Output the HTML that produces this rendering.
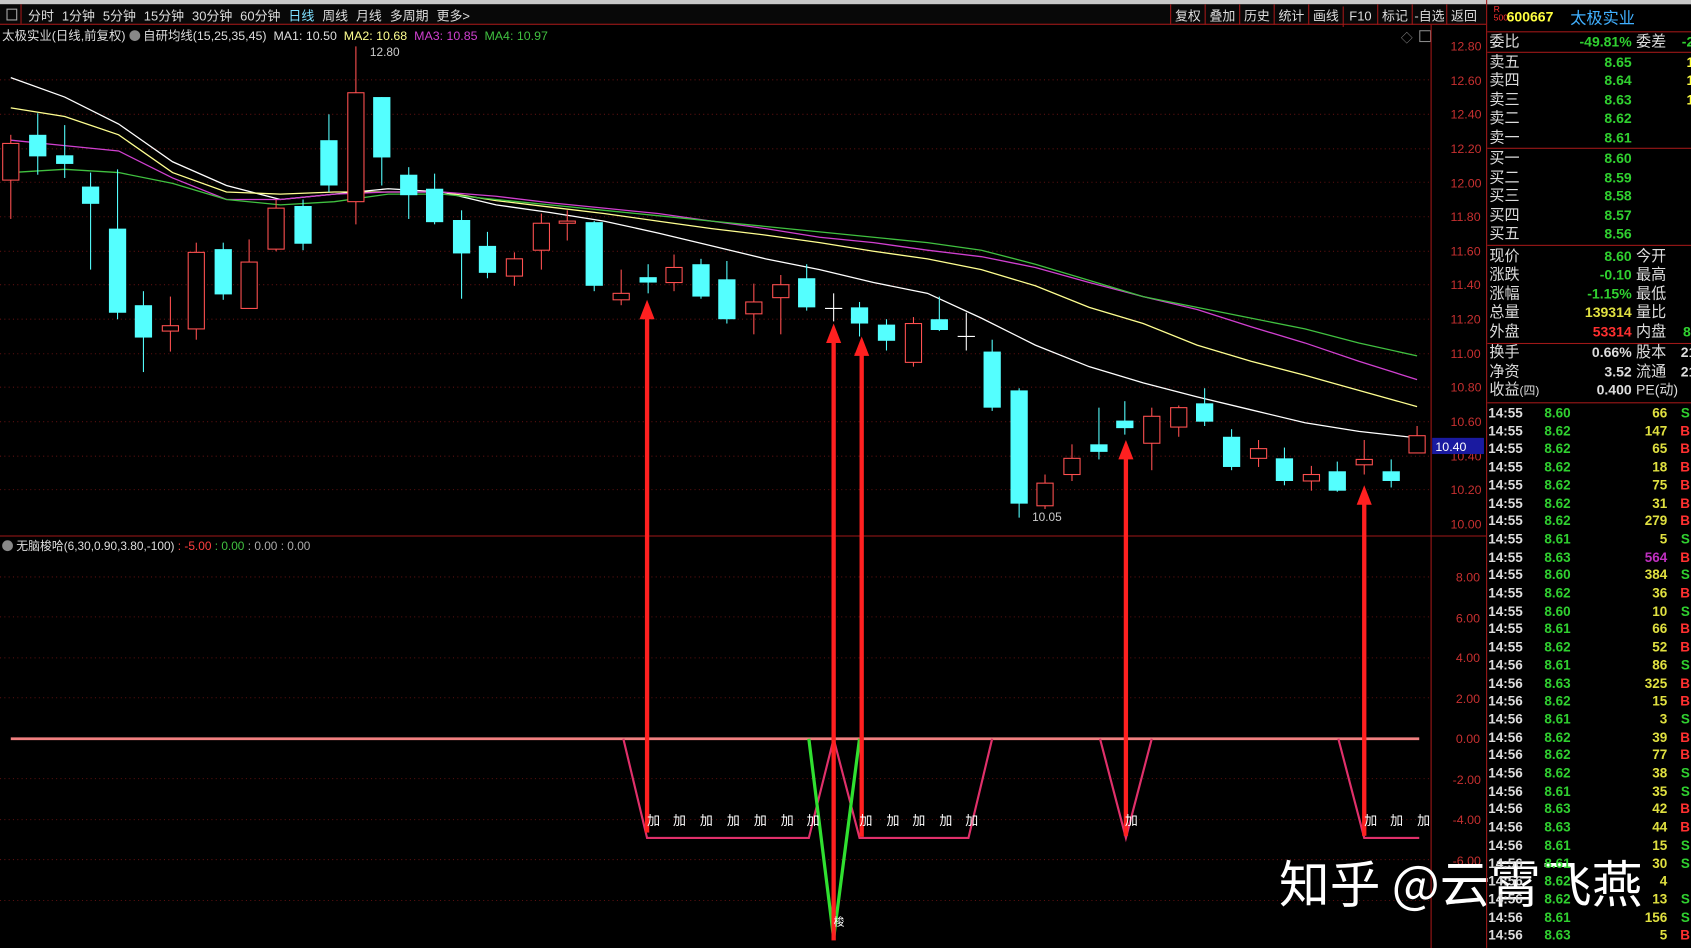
<!DOCTYPE html>
<html><head><meta charset="utf-8"><style>
html,body{margin:0;padding:0;background:#000;overflow:hidden;width:1691px;height:948px}
#w{position:absolute;left:0;top:0;width:1568px;height:879px;transform:scale(1.07845);transform-origin:0 0;background:#000;font-family:"Liberation Sans","Noto Sans CJK SC",sans-serif;color:#ddd}
.t{position:absolute;white-space:nowrap}
#rp div.r{position:absolute;left:0;width:200px;height:17px;font-size:14px;line-height:17px}
.l{position:absolute;left:2px;color:#ddd}
.v{position:absolute;right:66px;font-weight:bold;font-size:13px}
.l2{position:absolute;left:138px;color:#ddd}
.v2{position:absolute;right:-2px;font-weight:bold;font-size:13px}
.tk{position:absolute;left:0;width:190px;height:17px;font-size:12.5px;font-weight:bold;line-height:17px}
.tb{display:inline-block;width:31px;text-align:center;border-left:1px solid #a01818;padding-top:2px;height:17px}
</style></head><body><div id="w">
<div style="position:absolute;left:0;top:0;width:1568px;height:4px;background:#c8c8c8"></div>
<div style="position:absolute;left:0;top:4px;width:1378px;height:18px;border-bottom:1px solid #a01818;background:#080808"></div>
<div style="position:absolute;left:0;top:4px;width:19px;height:18px;border-right:1px solid #a01818"></div>
<div class="t" style="left:6px;top:8px;width:8px;height:9px;border:1px solid #aaa"></div>
<div class="t" style="left:26px;top:6px;font-size:12px;color:#ddd;word-spacing:4px">分时 1分钟 5分钟 15分钟 30分钟 60分钟 <span style="color:#7fe0ff">日线</span> 周线 月线 多周期 更多&gt;</div>
<div class="t" style="left:1085px;top:4px;height:19px;font-size:12px;color:#ddd"><span class="tb">复权</span><span class="tb">叠加</span><span class="tb">历史</span><span class="tb">统计</span><span class="tb">画线</span><span class="tb">F10</span><span class="tb">标记</span><span class="tb">-自选</span><span class="tb">返回</span></div>
<div class="t" style="left:2px;top:25px;font-size:11.5px;color:#ddd">太极实业(日线,前复权) <span style="display:inline-block;width:10px;height:10px;border-radius:50%;background:#888;vertical-align:-1px"></span> 自研均线(15,25,35,45) &nbsp;MA1: 10.50 &nbsp;<span style="color:#ffff90">MA2: 10.68</span> &nbsp;<span style="color:#d040d0">MA3: 10.85</span> &nbsp;<span style="color:#40c040">MA4: 10.97</span></div>
<div class="t" style="left:2px;top:498px;font-size:11px;color:#ddd"><span style="display:inline-block;width:10px;height:10px;border-radius:50%;background:#888;vertical-align:-1px"></span> 无脑梭哈(6,30,0.90,3.80,-100) <span style="color:#ff4040">: -5.00</span> <span style="color:#40c040">: 0.00</span> <span style="color:#aaa">: 0.00</span> <span style="color:#aaa">: 0.00</span></div>
<div class="t" style="left:1299px;top:27px;font-size:11px;color:#888">◇</div>
<div class="t" style="left:1316px;top:28px;width:9px;height:9px;border:1px solid #888"></div>
<svg style="position:absolute;left:0;top:0" width="1378" height="879">
<g stroke="#5a1010" stroke-dasharray="1 3" stroke-width="1">
<line x1="0" y1="74" x2="1327" y2="74"/><line x1="0" y1="106" x2="1327" y2="106"/><line x1="0" y1="138" x2="1327" y2="138"/><line x1="0" y1="169" x2="1327" y2="169"/><line x1="0" y1="201" x2="1327" y2="201"/><line x1="0" y1="233" x2="1327" y2="233"/><line x1="0" y1="264" x2="1327" y2="264"/><line x1="0" y1="296" x2="1327" y2="296"/><line x1="0" y1="328" x2="1327" y2="328"/><line x1="0" y1="359" x2="1327" y2="359"/><line x1="0" y1="391" x2="1327" y2="391"/><line x1="0" y1="423" x2="1327" y2="423"/><line x1="0" y1="454" x2="1327" y2="454"/>
<line x1="0" y1="535" x2="1327" y2="535"/><line x1="0" y1="572" x2="1327" y2="572"/><line x1="0" y1="610" x2="1327" y2="610"/><line x1="0" y1="647" x2="1327" y2="647"/><line x1="0" y1="722" x2="1327" y2="722"/><line x1="0" y1="760" x2="1327" y2="760"/><line x1="0" y1="797" x2="1327" y2="797"/><line x1="0" y1="835" x2="1327" y2="835"/>
</g>
<line x1="1327" y1="23" x2="1327" y2="879" stroke="#a01818"/>
<line x1="0" y1="497" x2="1378" y2="497" stroke="#a01818"/>
<g fill="#c83030" font-size="11.5" font-family="Liberation Sans">
<text x="1345" y="47">12.80</text><text x="1345" y="79">12.60</text><text x="1345" y="110">12.40</text><text x="1345" y="142">12.20</text><text x="1345" y="174">12.00</text><text x="1345" y="205">11.80</text><text x="1345" y="237">11.60</text><text x="1345" y="268">11.40</text><text x="1345" y="300">11.20</text><text x="1345" y="332">11.00</text><text x="1345" y="363">10.80</text><text x="1345" y="395">10.60</text><text x="1345" y="427">10.40</text><text x="1345" y="458">10.20</text><text x="1345" y="490">10.00</text>
<text x="1350" y="539">8.00</text><text x="1350" y="577">6.00</text><text x="1350" y="614">4.00</text><text x="1350" y="652">2.00</text><text x="1350" y="689">0.00</text><text x="1347" y="727">-2.00</text><text x="1347" y="764">-4.00</text><text x="1347" y="802">-6.00</text>
</g>
<rect x="1328" y="406" width="48" height="15" fill="#1a1aa0"/><text x="1331" y="418" fill="#fff" font-size="11.5" font-family="Liberation Sans">10.40</text>
<g fill="none" stroke-width="1.2">
<polyline stroke="#ffffff" points="10,72 60,90 110,115 160,150 210,172 260,185 310,180 360,175 410,178 460,190 510,197 560,205 610,216 660,228 710,240 760,250 810,262 860,272 910,295 960,320 1010,340 1060,355 1110,368 1160,380 1210,392 1260,400 1314,406"/>
<polyline stroke="#ffff90" points="10,100 60,108 110,125 160,160 210,178 260,180 310,178 360,178 410,178 460,186 510,192 560,198 610,205 660,212 710,218 760,225 810,233 860,240 910,250 960,265 1010,285 1060,300 1110,320 1160,335 1210,348 1260,362 1314,377"/>
<polyline stroke="#d040d0" points="10,130 60,135 110,140 160,165 210,185 260,185 310,180 360,178 410,178 460,182 510,188 560,193 610,198 660,205 710,212 760,220 810,225 860,232 910,238 960,248 1010,262 1060,275 1110,287 1160,303 1210,318 1260,335 1314,352"/>
<polyline stroke="#40c040" points="10,160 60,157 110,160 160,170 210,185 260,190 310,187 360,180 410,180 460,185 510,190 560,195 610,200 660,205 710,210 760,215 810,220 860,225 910,232 960,245 1010,260 1060,275 1110,285 1160,295 1210,305 1260,318 1314,330"/>
</g>
<g id="c"></g>
<text x="343" y="52" fill="#ccc" font-size="11" font-family="Liberation Sans">12.80</text>
<text x="957" y="483" fill="#ccc" font-size="11" font-family="Liberation Sans">10.05</text>
<line x1="10" y1="685" x2="1316" y2="685" stroke="#f08080" stroke-width="2.5"/>
<g fill="none" stroke="#e0306a" stroke-width="2">
<polyline points="578,685 600,777 750,777 773,685 797,777 898,777 920,685"/>
<polyline points="1020,685 1044,777 1068,685"/>
<polyline points="1241,685 1265,777 1316,777"/>
</g>
<polyline points="750,685 773,870 797,685" fill="none" stroke="#30e030" stroke-width="3"/>
<g fill="#ff2020" stroke="none">
<rect x="598" y="290" width="4" height="482"/><polygon points="593,296 600,278 607,296"/>
<rect x="771" y="312" width="4" height="560"/><polygon points="766,318 773,300 780,318"/>
<rect x="797" y="324" width="4" height="452"/><polygon points="792,330 799,312 806,330"/>
<rect x="1042" y="420" width="4" height="355"/><polygon points="1037,426 1044,408 1051,426"/>
<rect x="1263" y="462" width="4" height="313"/><polygon points="1258,468 1265,450 1272,468"/>
</g>
<g fill="#fff" font-size="12" font-family="Noto Sans CJK SC">
<text x="600" y="765">加</text><text x="624" y="765">加</text><text x="649" y="765">加</text><text x="674" y="765">加</text><text x="699" y="765">加</text><text x="724" y="765">加</text><text x="748" y="765">加</text>
<text x="797" y="765">加</text><text x="822" y="765">加</text><text x="846" y="765">加</text><text x="871" y="765">加</text><text x="895" y="765">加</text>
<text x="1043" y="765">加</text><text x="1265" y="765">加</text><text x="1289" y="765">加</text><text x="1314" y="765">加</text>
<text x="773" y="858" font-size="10">梭</text>
</g>
</svg>
<div class="t" style="left:1186px;top:782px;font-size:47px;color:#fff;font-family:'Noto Sans CJK SC',sans-serif">知乎 @云霄飞燕</div>
<div id="rp" style="position:absolute;left:1378px;top:0;width:190px;height:879px;border-left:1px solid #a01818;overflow:hidden">
<div class="t" style="left:6px;top:5px;font-size:8px;color:#ff3030;line-height:8px">R<br>500</div>
<div class="t" style="left:18px;top:8px;font-size:13px;font-weight:bold;color:#ffff40">600667</div>
<div class="t" style="left:77px;top:6px;font-size:15px;color:#40b0ff">太极实业</div>
<div style="position:absolute;left:0;top:29px;width:190px;border-top:1px solid #a01818"></div>
<div class="r" style="top:30px"><span class="l">委比</span><span class="v" style="color:#30d030">-49.81%</span><span class="l2">委差</span><span class="v2" style="color:#30d030;right:8px">-2</span></div>
<div style="position:absolute;left:0;top:48px;width:190px;border-top:1px solid #a01818"></div>
<div class="r" style="top:49px"><span class="l">卖五</span><span class="v" style="color:#30d030">8.65</span><span class="v2" style="color:#ffff40;right:8px">1</span></div>
<div class="r" style="top:66px"><span class="l">卖四</span><span class="v" style="color:#30d030">8.64</span><span class="v2" style="color:#ffff40;right:8px">1</span></div>
<div class="r" style="top:84px"><span class="l">卖三</span><span class="v" style="color:#30d030">8.63</span><span class="v2" style="color:#ffff40;right:8px">1</span></div>
<div class="r" style="top:101px"><span class="l">卖二</span><span class="v" style="color:#30d030">8.62</span></div>
<div class="r" style="top:119px"><span class="l">卖一</span><span class="v" style="color:#30d030">8.61</span></div>
<div style="position:absolute;left:0;top:137px;width:190px;border-top:1px solid #a01818"></div>
<div class="r" style="top:138px"><span class="l">买一</span><span class="v" style="color:#30d030">8.60</span></div>
<div class="r" style="top:156px"><span class="l">买二</span><span class="v" style="color:#30d030">8.59</span></div>
<div class="r" style="top:173px"><span class="l">买三</span><span class="v" style="color:#30d030">8.58</span></div>
<div class="r" style="top:191px"><span class="l">买四</span><span class="v" style="color:#30d030">8.57</span></div>
<div class="r" style="top:208px"><span class="l">买五</span><span class="v" style="color:#30d030">8.56</span></div>
<div style="position:absolute;left:0;top:227px;width:190px;border-top:1px solid #a01818"></div>
<div class="r" style="top:229px"><span class="l">现价</span><span class="v" style="color:#30d030">8.60</span><span class="l2">今开</span></div>
<div class="r" style="top:246px"><span class="l">涨跌</span><span class="v" style="color:#30d030">-0.10</span><span class="l2">最高</span></div>
<div class="r" style="top:264px"><span class="l">涨幅</span><span class="v" style="color:#30d030">-1.15%</span><span class="l2">最低</span></div>
<div class="r" style="top:281px"><span class="l">总量</span><span class="v" style="color:#e0e040">139314</span><span class="l2">量比</span></div>
<div class="r" style="top:299px"><span class="l">外盘</span><span class="v" style="color:#ff3030">53314</span><span class="l2">内盘</span><span class="v2" style="color:#30d030;right:4px">86</span></div>
<div style="position:absolute;left:0;top:318px;width:190px;border-top:1px solid #a01818"></div>
<div class="r" style="top:318px"><span class="l">换手</span><span class="v" style="color:#ddd">0.66%</span><span class="l2">股本</span><span class="v2" style="color:#ddd;right:6px">21</span></div>
<div class="r" style="top:336px"><span class="l">净资</span><span class="v" style="color:#ddd">3.52</span><span class="l2">流通</span><span class="v2" style="color:#ddd;right:6px">21</span></div>
<div class="r" style="top:353px"><span class="l">收益<span style="font-size:11px">(四)</span></span><span class="v" style="color:#ddd">0.400</span><span class="l2" style="font-size:13px">PE(动)</span></div>
<div style="position:absolute;left:0;top:373px;width:190px;border-top:1px solid #a01818"></div>
<div id="tk"></div>
</div>
</div>
<script>
var C=[[10,133,167,125,203,0],[35,125,145,105,162,1],[60,144,152,116,165,1],[84,173,189,160,250,1],[109,212,290,157,296,1],[133,283,313,270,345,1],[158,302,307,275,326,0],[182,234,305,225,315,0],[207,231,273,225,278,1],[231,243,286,222,286,0],[256,193,231,185,233,0],[281,191,226,185,232,1],[305,130,172,106,178,1],[330,86,187,43,208,0],[354,90,146,90,172,1],[379,162,181,155,203,1],[403,175,206,161,208,1],[428,204,235,195,277,1],[452,228,253,215,258,1],[477,240,256,234,265,0],[502,207,232,198,250,0],[526,205,207,195,223,0],[551,206,265,205,270,1],[576,272,278,250,283,0],[601,257,262,245,272,1],[625,248,262,236,270,0],[650,245,275,240,277,1],[674,259,296,242,300,1],[699,280,291,263,310,0],[724,264,276,255,310,0],[748,258,285,245,288,1],[773,286,287,272,298,2],[797,285,300,280,312,1],[822,301,316,296,325,1],[847,300,336,294,340,0],[871,296,306,275,307,1],[896,312,313,290,325,2],[920,326,378,315,381,1],[945,362,467,360,480,1],[969,448,469,440,472,0],[994,425,440,412,446,0],[1019,412,419,378,426,1],[1043,390,397,372,403,1],[1068,386,411,378,436,0],[1093,378,396,376,405,0],[1117,374,391,360,395,1],[1142,405,433,398,436,1],[1167,416,425,408,433,0],[1191,425,446,415,450,1],[1216,440,446,432,455,0],[1240,437,455,428,456,1],[1265,426,431,408,440,0],[1290,437,446,426,452,1],[1314,404,420,395,420,0]];
var s='';C.forEach(function(c){var x=c[0],col=c[5]==1?'#54ffff':(c[5]==2?'#fff':'#ff5050');
s+='<line x1="'+x+'" y1="'+c[3]+'" x2="'+x+'" y2="'+c[4]+'" stroke="'+col+'"/>';
if(c[5]==1)s+='<rect x="'+(x-8)+'" y="'+c[1]+'" width="16" height="'+(c[2]-c[1])+'" fill="#54ffff"/>';
else if(c[5]==2)s+='<line x1="'+(x-8)+'" y1="'+c[1]+'" x2="'+(x+8)+'" y2="'+c[1]+'" stroke="#fff"/>';
else s+='<rect x="'+(x-7.5)+'" y="'+c[1]+'" width="15" height="'+Math.max(1,c[2]-c[1])+'" fill="#000" stroke="#ff5050"/>';});
document.getElementById('c').innerHTML=s;
var T=[["14:55","8.60","66","S"],["14:55","8.62","147","B"],["14:55","8.62","65","B"],["14:55","8.62","18","B"],["14:55","8.62","75","B"],["14:55","8.62","31","B"],["14:55","8.62","279","B"],["14:55","8.61","5","S"],["14:55","8.63","564","B"],["14:55","8.60","384","S"],["14:55","8.62","36","B"],["14:55","8.60","10","S"],["14:55","8.61","66","B"],["14:55","8.62","52","B"],["14:56","8.61","86","S"],["14:56","8.63","325","B"],["14:56","8.62","15","B"],["14:56","8.61","3","S"],["14:56","8.62","39","B"],["14:56","8.62","77","B"],["14:56","8.62","38","S"],["14:56","8.61","35","S"],["14:56","8.63","42","B"],["14:56","8.63","44","B"],["14:56","8.61","15","S"],["14:56","8.61","30","S"],["14:56","8.62","4",""],["14:56","8.62","13","S"],["14:56","8.61","156","S"],["14:56","8.63","5","B"]];
var h='';T.forEach(function(r,i){var y=375+i*16.7;h+='<div class="tk" style="top:'+y+'px"><span style="position:absolute;left:1px;color:#ddd">'+r[0]+'</span><span style="position:absolute;left:53px;color:#30d030">'+r[1]+'</span><span style="position:absolute;right:23px;color:'+(r[2]=="564"?"#c030c0":"#e0e040")+'">'+r[2]+'</span><span style="position:absolute;right:2px;color:'+(r[3]=="B"?"#ff3030":"#30d030")+'">'+r[3]+'</span></div>';});
document.getElementById('tk').innerHTML=h;
</script>
</body></html>
